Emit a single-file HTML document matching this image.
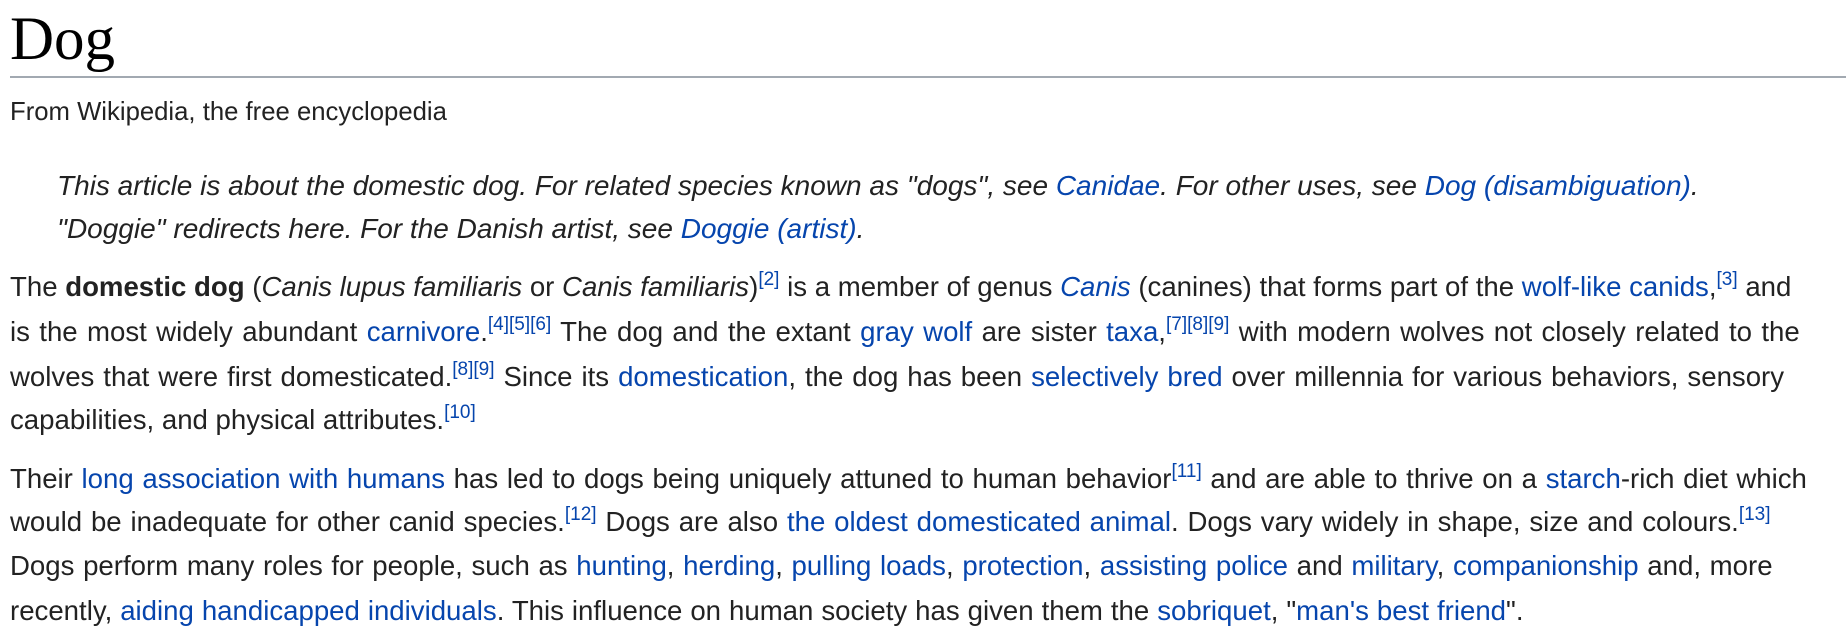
<!DOCTYPE html>
<html><head><meta charset="utf-8"><style>
body{margin:0;background:#fff;width:1846px;height:638px;overflow:hidden;font-family:"Liberation Sans",Arial,sans-serif;color:#222}
h1{position:absolute;left:10px;top:4px;margin:0;font-family:"Liberation Serif",serif;font-weight:normal;font-size:61px;line-height:72px;color:#000}
.rule{position:absolute;left:10px;right:0;top:76px;height:2px;background:#a2a9b1}
.l{position:absolute;left:10px;white-space:nowrap;font-size:27.6px;line-height:30px}
.from{font-size:25.7px}
.hat{left:57px;font-style:italic;font-size:28px}
a{color:#0645ad;text-decoration:none}
sup{font-size:19px;line-height:0;vertical-align:0;position:relative;top:-11px}
</style></head><body>
<h1>Dog</h1>
<div class="rule"></div>
<div class="l from" style="top:97px">From Wikipedia, the free encyclopedia</div>
<div class="l hat" style="top:171px">This article is about the domestic dog. For related species known as "dogs", see <a>Canidae</a>. For other uses, see <a>Dog (disambiguation)</a>.</div>
<div class="l hat" style="top:214px">"Doggie" redirects here. For the Danish artist, see <a>Doggie (artist)</a>.</div>
<div class="l" style="top:272px">The <b>domestic dog</b> (<i>Canis lupus familiaris</i> or <i>Canis familiaris</i>)<sup><a>[2]</a></sup> is a member of genus <i><a>Canis</a></i> (canines) that forms part of the <a>wolf-like canids</a>,<sup><a>[3]</a></sup> and</div>
<div class="l" style="top:317px;word-spacing:1.7px">is the most widely abundant <a>carnivore</a>.<sup><a>[4][5][6]</a></sup> The dog and the extant <a>gray wolf</a> are sister <a>taxa</a>,<sup><a>[7][8][9]</a></sup> with modern wolves not closely related to the</div>
<div class="l" style="top:362px;word-spacing:1.3px">wolves that were first domesticated.<sup><a>[8][9]</a></sup> Since its <a>domestication</a>, the dog has been <a>selectively bred</a> over millennia for various behaviors, sensory</div>
<div class="l" style="top:405px">capabilities, and physical attributes.<sup><a>[10]</a></sup></div>
<div class="l" style="top:464px;word-spacing:1px">Their <a>long association with humans</a> has led to dogs being uniquely attuned to human behavior<sup><a>[11]</a></sup> and are able to thrive on a <a>starch</a>-rich diet which</div>
<div class="l" style="top:507px;word-spacing:1.2px">would be inadequate for other canid species.<sup><a>[12]</a></sup> Dogs are also <a>the oldest domesticated animal</a>. Dogs vary widely in shape, size and colours.<sup><a>[13]</a></sup></div>
<div class="l" style="top:551px;word-spacing:1px">Dogs perform many roles for people, such as <a>hunting</a>, <a>herding</a>, <a>pulling loads</a>, <a>protection</a>, <a>assisting police</a> and <a>military</a>, <a>companionship</a> and, more</div>
<div class="l" style="top:596px;word-spacing:0.3px">recently, <a>aiding handicapped individuals</a>. This influence on human society has given them the <a>sobriquet</a>, "<a>man's best friend</a>".</div>
</body></html>
